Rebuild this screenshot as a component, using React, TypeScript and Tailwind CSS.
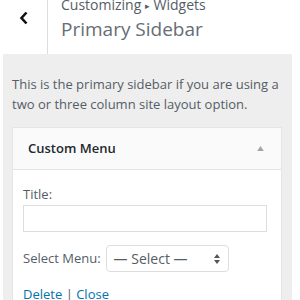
export default function App() {
  return (
    <div className="w-[300px] h-[300px] overflow-hidden bg-white text-[#555d66] font-['Open_Sans',sans-serif]">
      {/* Header */}
      <div className="flex h-[54px] bg-white">
        <div className="w-[48px] border-r border-[#dddddd] flex justify-center pt-[11px]">
          <svg width="10" height="14" viewBox="0 0 10 14">
            <path d="M7.5 1.5 L2.5 7 L7.5 12.5" fill="none" stroke="#111" strokeWidth="2.6" />
          </svg>
        </div>
        <div className="pl-[13px]">
          <div className="text-[14px] leading-[20px] -mt-[5px]">
            Customizing <span className="text-[9px] align-middle">▸</span> Widgets
          </div>
          <div className="text-[19px] leading-[26px] text-[#666d74]">Primary Sidebar</div>
        </div>
      </div>

      {/* Panel */}
      <div className="ml-[3px] w-[289px] bg-[#eeeeee] px-[9px] pt-[20px] h-[246px]">
        <p className="text-[13px] leading-[20px] mb-[13px]">
          This is the primary sidebar if you are using a two or three column site layout option.
        </p>

        <div className="bg-white border border-[#e5e5e5] w-[270px]">
          <div className="flex items-center justify-between h-[42px] px-[15px] bg-[#fafafa] border-b border-[#e5e5e5]">
            <span className="text-[13px] font-semibold text-[#23282d]">Custom Menu</span>
            <svg width="7" height="5" viewBox="0 0 8 6" className="mr-[2px]">
              <path d="M0 6 L4 0 L8 6 Z" fill="#a0a5aa" />
            </svg>
          </div>
          <div className="px-[10px] pt-[14px]">
            <div className="text-[13px] leading-[20px]">Title:</div>
            <div className="mt-[1px] w-[244px] h-[27px] border border-[#dddddd] bg-white" />
            <div className="flex items-center mt-[13px]">
              <span className="text-[13px]">Select Menu:</span>
              <div className="ml-[5px] w-[123px] h-[27px] border border-[#dddddd] rounded-[4px] flex items-center justify-between pl-[7px] pr-[8px]">
                <span className="text-[14px]">— Select —</span>
                <svg width="6" height="10" viewBox="0 0 6 10">
                  <path d="M0 4 L3 0 L6 4 Z M0 6 L3 10 L6 6 Z" fill="#555" />
                </svg>
              </div>
            </div>
            <div className="text-[13px] mt-[13px] text-[#0073aa]">
              Delete <span className="text-[#555d66]">|</span> Close
            </div>
          </div>
        </div>
      </div>
    </div>
  )
}
